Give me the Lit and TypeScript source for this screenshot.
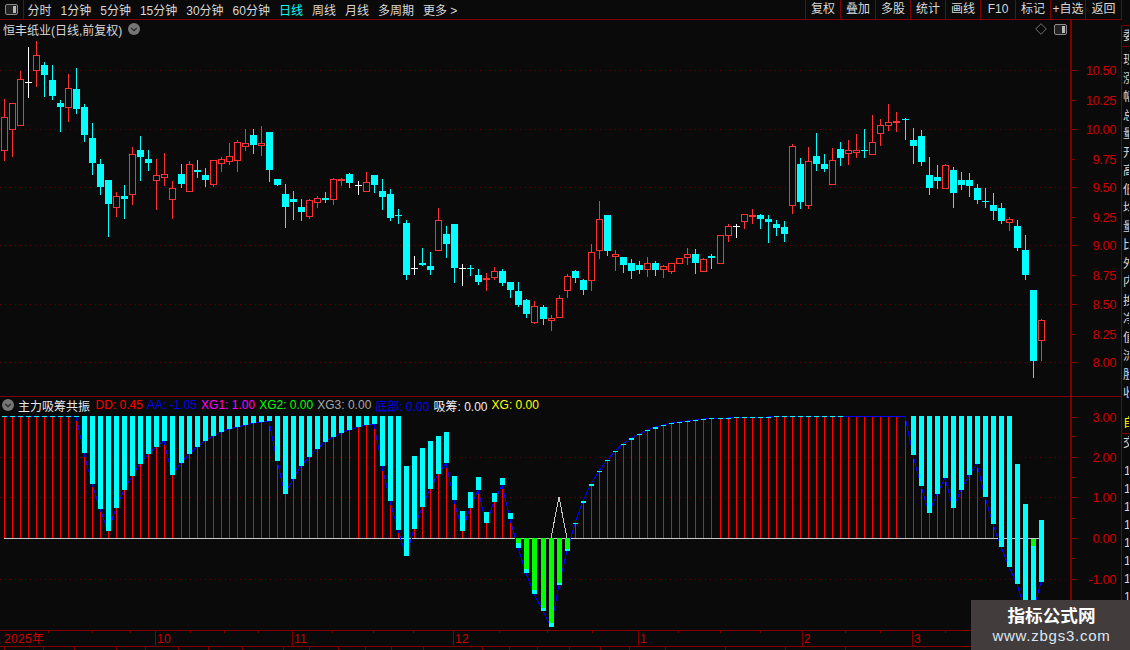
import { LitElement, css, html, svg } from "lit";
import { customElement } from "lit/decorators.js";

type Candle = { kind: string; high: number; top: number; bottom: number; low: number };
type Row = [string, number, number, number, number];

const RED = "#ff3232";
const CYAN = "#00ffff";

// rows read at 3x: kind, high, body top, body bottom, low, relative to a base y
const toCandles = (base: number, rows: Row[]): Candle[] =>
  rows.map(([kind, high, top, bottom, low]) => ({
    kind,
    high: Math.floor(base + high / 3),
    top: Math.floor(base + top / 3),
    bottom: Math.floor(base + bottom / 3),
    low: Math.floor(base + low / 3),
  }));

const candles: Candle[] = [
  ...toCandles(30, [
    ["r", 207, 262, 361, 392], ["r", 220, 220, 298, 380], ["r", 123, 148, 287, 287], ["w", 52, 157, 157, 203],
    ["r", 34, 76, 122, 170], ["c", 97, 106, 137, 200], ["c", 105, 151, 200, 209], ["c", 211, 220, 233, 305],
    ["r", 132, 175, 233, 275], ["c", 114, 178, 239, 251], ["c", 223, 232, 317, 335], ["c", 280, 325, 401, 434],
    ["c", 388, 403, 473, 494], ["c", 451, 451, 524, 620], ["r", 487, 499, 532, 560], ["c", 465, 499, 509, 566],
    ["r", 351, 373, 493, 524], ["c", 319, 361, 383, 452], ["c", 361, 388, 401, 422], ["r", 388, 436, 451, 539],
    ["r", 370, 433, 442, 467], ["r", 454, 475, 508, 566], ["c", 403, 433, 464, 472], ["r", 394, 403, 484, 485],
    ["c", 391, 421, 428, 443], ["c", 415, 436, 452, 470], ["r", 391, 391, 463, 470], ["r", 382, 388, 400, 424],
    ["r", 340, 379, 394, 403], ["r", 331, 337, 391, 425], ["r", 298, 340, 349, 361], ["c", 298, 316, 347, 371],
    ["r", 289, 340, 346, 377], ["c", 307, 307, 422, 455], ["c", 447, 448, 467, 467],
  ]),
  ...toCandles(150, [
    ["c", 102, 132, 173, 233], ["c", 123, 147, 158, 209], ["c", 148, 171, 186, 212], ["r", 148, 151, 200, 206],
    ["r", 139, 145, 158, 173], ["c", 126, 144, 150, 158], ["r", 85, 88, 149, 164], ["r", 85, 88, 92, 107],
    ["c", 70, 72, 101, 113], ["w", 94, 105, 105, 134], ["r", 67, 97, 125, 125], ["c", 76, 76, 107, 126],
    ["c", 88, 124, 143, 179], ["c", 118, 133, 206, 212], ["c", 178, 196, 200, 221], ["c", 211, 220, 377, 389],
    ["w", 319, 355, 355, 374], ["c", 295, 340, 347, 347], ["c", 307, 349, 362, 374], ["r", 175, 211, 302, 302],
    ["c", 229, 253, 284, 323], ["c", 223, 223, 356, 398], ["w", 343, 355, 355, 407], ["c", 346, 355, 359, 377],
    ["c", 358, 376, 398, 404], ["r", 370, 385, 388, 422], ["r", 352, 364, 383, 387], ["c", 358, 364, 401, 407],
    ["c", 397, 397, 422, 443], ["c", 397, 424, 467, 470], ["c", 448, 451, 494, 503], ["r", 454, 469, 518, 521],
    ["c", 466, 472, 509, 524], ["r", 496, 505, 512, 542], ["r", 436, 445, 502, 503], ["r", 373, 379, 421, 443],
    ["c", 361, 364, 386, 398],
  ]),
  ...toCandles(190, [
    ["c", 267, 270, 300, 312], ["r", 163, 187, 272, 300], ["r", 34, 88, 182, 204], ["c", 75, 75, 183, 195],
    ["r", 181, 193, 200, 240], ["c", 201, 201, 225, 246], ["c", 207, 219, 243, 264], ["c", 213, 225, 240, 249],
    ["r", 202, 220, 239, 258], ["c", 213, 219, 240, 255], ["r", 226, 229, 239, 261], ["r", 220, 220, 243, 249],
    ["r", 205, 205, 220, 221], ["r", 175, 193, 203, 222], ["c", 178, 192, 219, 249], ["r", 205, 208, 243, 243],
    ["c", 193, 198, 204, 234], ["r", 135, 136, 221, 221], ["r", 102, 109, 137, 153], ["w", 103, 108, 108, 141],
    ["r", 72, 73, 95, 114], ["r", 58, 75, 80, 100], ["c", 72, 75, 87, 114], ["c", 76, 87, 96, 156],
    ["c", 91, 102, 114, 135], ["c", 94, 112, 132, 153],
  ]),
  ...toCandles(95, [
    ["r", 148, 154, 331, 354], ["c", 190, 208, 323, 339], ["r", 157, 199, 331, 339], ["c", 114, 184, 209, 225],
    ["c", 178, 208, 224, 228], ["r", 160, 196, 269, 269], ["c", 142, 163, 191, 210], ["r", 136, 166, 175, 207],
    ["r", 118, 166, 172, 186], ["c", 102, 165, 168, 186], ["r", 61, 142, 179, 179], ["r", 72, 91, 116, 150],
    ["r", 28, 82, 91, 105], ["r", 52, 79, 83, 108], ["c", 70, 72, 77, 132], ["c", 99, 136, 155, 204],
    ["c", 106, 124, 203, 210], ["c", 187, 241, 281, 297], ["c", 211, 247, 260, 279], ["r", 208, 211, 281, 281],
    ["c", 217, 226, 296, 336], ["c", 232, 256, 270, 282], ["c", 235, 256, 273, 303], ["c", 268, 280, 315, 324],
    ["c", 280, 319, 320, 336], ["c", 295, 331, 350, 372], ["c", 325, 340, 380, 384], ["r", 367, 373, 383, 405],
    ["c", 376, 394, 461, 465], ["c", 421, 466, 542, 552], ["c", 586, 586, 800, 846], ["r", 673, 676, 737, 795],
  ]),
];

// x pixel of a bar's centre column, shared by both panes
const barX = (i: number) => Math.floor(4.05 + 8.0445 * i);

const ZERO = 538;

// cyan bars hanging from the 3.00 line: [index, bottom y]
const hanging: [number, number][] = [
  [10, 453], [11, 484], [12, 509], [13, 531], [14, 508], [15, 490], [16, 476], [17, 464], [18, 454], [19, 447],
  [20, 441], [21, 475], [22, 463], [23, 454], [24, 447], [25, 441], [26, 436], [27, 432], [28, 429], [29, 427],
  [30, 425], [31, 423], [32, 422], [33, 421], [34, 461], [35, 494], [36, 479], [37, 466], [38, 457], [39, 449],
  [40, 442], [41, 437], [42, 433], [43, 430], [44, 427], [45, 425], [46, 424], [47, 466], [48, 501], [49, 530],
  [113, 455], [114, 486], [115, 513], [116, 494], [117, 478], [118, 508], [119, 490], [120, 475], [121, 464],
  [122, 497], [123, 524], [124, 547], [125, 567],
];

// floating cyan bars: [index, top y, bottom y]
const floating: [number, number, number][] = [
  [50, 466, 556], [51, 456, 529], [52, 448, 507], [53, 441, 489], [54, 436, 474], [55, 432, 463], [56, 476, 500],
  [57, 511, 531], [58, 492, 508], [59, 477, 490], [60, 512, 523], [61, 493, 502], [62, 478, 485], [63, 513, 519],
  [126, 464, 584], [127, 504, 610], [129, 520, 582],
];

// green bars with a cyan foot: [index, green end, cyan end]
const falling: [number, number, number][] = [
  [64, 543, 548], [65, 569, 573], [66, 590, 594], [67, 608, 611], [68, 623, 627], [69, 583, 585], [70, 549, 551],
];

// rising stretch, only a dash sits on the stem: [index, y, dash height]
const dashes: [number, number, number][] = [
  [71, 523, 1], [72, 501, 2], [73, 484, 2], [74, 471, 1], [75, 460, 1], [76, 451, 1], [77, 444, 1], [78, 438, 2],
  [79, 434, 1], [80, 430, 1], [81, 427, 2], [82, 425, 1], [83, 423, 1], [84, 422, 1], [85, 421, 1], [86, 420, 1],
  [87, 419, 1], [88, 418, 1], [89, 418, 1], [90, 418, 1], [91, 417, 1], [92, 417, 1], [93, 417, 1], [94, 417, 1],
  [95, 417, 1], [96, 416, 1], [97, 416, 1], [98, 416, 1], [99, 416, 1], [100, 416, 1], [101, 416, 1], [102, 416, 1],
  [103, 416, 1], [104, 416, 1],
];

const values: number[] = [];
for (let i = 0; i < 130; i++) values[i] = 416;
hanging.forEach(([i, y]) => (values[i] = y));
floating.forEach(([i, , y]) => (values[i] = y));
falling.forEach(([i, , y]) => (values[i] = y));
dashes.forEach(([i, y]) => (values[i] = y));
values[128] = 612;

// label, y, tick length
const priceTicks: [string, number, number][] = [
  ["10.50", 70, 5], ["10.25", 100, 3], ["10.00", 129, 5], ["9.75", 159, 3], ["9.50", 187, 5], ["9.25", 217, 3],
  ["9.00", 245, 5], ["8.75", 275, 3], ["8.50", 304, 5], ["8.25", 334, 3], ["8.00", 362, 5],
];

const lowerLabels: [string, number][] = [["3.00", 417], ["2.00", 457], ["1.00", 497], ["0.00", 538], ["-1.00", 579]];
const lowerMinor = [436, 477, 518, 558, 600];

const months: [string, number][] = [["2025年", 0], ["10", 155], ["11", 292], ["12", 453], ["1", 638], ["2", 802], ["3", 912]];
const timeTicks = [48, 92, 130, 190, 224, 258, 332, 373, 413, 499, 547, 592, 678, 720, 760, 845, 880, 945, 985, 1030];

const legend = [
  ["DD: 0.45", "#ff0000"], ["AA: -1.05", "#0000ff"], ["XG1: 1.00", "#ff00ff"], ["XG2: 0.00", "#00ff00"],
  ["XG3: 0.00", "#a8a8a8"], ["底部: 0.00", "#0000ff"], ["吸筹: 0.00", "#f0f0f0"], ["XG: 0.00", "#ffff00"],
];

const periods = ["分时", "1分钟", "5分钟", "15分钟", "30分钟", "60分钟", "日线", "周线", "月线", "多周期"];
const tools = ["复权", "叠加", "多股", "统计", "画线", "F10", "标记", "+自选", "返回"];
const sideUpper = ["现", "涨", "幅", "总", "量", "开", "高", "低", "均", "量", "比", "外", "内", "换", "净", "值", "流", "股", "收"];
const tabs = [3, 39, 31, 42, 29, 33, 30, 34, 41, 26, 29, 27, 26, 32, 59, 27, 28, 32, 31, 29, 36, 60, 60, 60];

const panelIcon = () => svg`
  <svg width="13" height="11" viewBox="0 0 13 11">
    <rect x="0.5" y="0.5" width="12" height="10" rx="1.5" fill="#222" stroke="#8a8a8a"/>
    <rect x="8" y="2" width="3" height="7" fill="#b8b8b8"/>
  </svg>`;

const roundChevron = svg`
  <svg class="chevron" width="12" height="12" viewBox="0 0 12 12">
    <circle cx="6" cy="6" r="6" fill="#767676"/>
    <path d="M3.2 4.8 6 7.6 8.8 4.8" fill="none" stroke="#222" stroke-width="1.2"/>
  </svg>`;

@customElement("app-root")
export class AppRoot extends LitElement {
  static styles = css`
    :host {
      display: block;
      position: relative;
      width: 1130px;
      height: 650px;
      overflow: hidden;
      background: #0a0a0a;
      color: #d8d8d8;
      font: 12px "Liberation Sans", "Noto Sans CJK SC", sans-serif;
    }
    svg { display: block; }
    .toolbar {
      display: flex;
      align-items: center;
      width: 1122px;
      height: 19px;
      border-bottom: 1px solid #800000;
    }
    .toggle {
      display: flex;
      align-items: center;
      justify-content: center;
      width: 23px;
      height: 19px;
      border-right: 1px solid #800000;
      margin-right: 3.5px;
    }
    .periods { display: flex; gap: 9px; }
    .periods .on { color: #00ffff; }
    .tools { display: flex; margin-left: auto; }
    .tools span {
      box-sizing: border-box;
      width: 35px;
      height: 19px;
      line-height: 18px;
      text-align: center;
      border-left: 1px solid #800000;
    }
    .tools span:last-child { width: 37px; border-right: 1px solid #800000; }
    .main { display: flex; }
    .left { width: 1121px; flex: none; }
    .pane { display: flex; position: relative; }
    .pane.top { height: 376px; border-bottom: 1px solid #800000; }
    .pane.lower { height: 233px; }
    .chart { width: 1070px; height: 100%; flex: none; }
    .axis { width: 49px; height: 100%; flex: none; border-left: 2px solid #800000; }
    .axis text { fill: #cc0000; font-size: 13px; letter-spacing: -0.45px; text-anchor: end; }
    .title {
      position: absolute;
      top: 1px;
      left: 3px;
      display: flex;
      align-items: center;
      gap: 6px;
      height: 16px;
    }
    .corner {
      position: absolute;
      top: 3px;
      right: 54px;
      display: flex;
      align-items: center;
      gap: 7px;
    }
    .legend {
      position: absolute;
      top: 0;
      left: 2px;
      display: flex;
      align-items: center;
      gap: 4.07px;
      height: 16px;
      white-space: nowrap;
    }
    .legend .name { color: #e8e8e8; margin-right: 1.4px; }
    .time { height: 15px; border-top: 1px solid #800000; border-bottom: 1px solid #800000; }
    .time svg { width: 1121px; height: 15px; }
    .time text { fill: #cc0000; font-size: 12px; letter-spacing: 0.3px; }
    .tabs { display: flex; height: 4px; }
    .tabs span {
      box-sizing: border-box;
      flex: none;
      height: 24px;
      border-right: 1px solid #800000;
      padding: 2px 0 0 4px;
      color: #e8e8e8;
      white-space: nowrap;
    }
    .strip {
      width: 8px;
      box-sizing: border-box;
      border-left: 1px solid #800000;
      overflow: hidden;
      margin-top: 5px;
      white-space: nowrap;
    }
    .strip .cell { height: 18.5px; line-height: 18.5px; padding-left: 1px; color: #d8d8d8; }
    .strip .cell.head { height: 20px; line-height: 20px; border-top: 1px solid #800000; border-bottom: 1px solid #800000; margin-bottom: 4px; }
    .strip .gap { height: 10px; }
    .strip .self { height: 20px; line-height: 20px; padding-left: 1px; color: #ffff00; border-bottom: 1px solid #800000; }
    .strip .num { height: 18px; line-height: 18px; padding-left: 2px; }
    .mark {
      position: absolute;
      right: 0;
      bottom: 0;
      width: 159px;
      height: 50px;
      display: flex;
      flex-direction: column;
      align-items: center;
      background: #433c3c;
      padding-left: 2px;
      box-sizing: border-box;
    }
    .mark b { margin-top: 4px; font: bold 17.6px/22px "Noto Sans CJK SC", sans-serif; color: #fff; }
    .mark span { font: 15px/20px "Liberation Sans", sans-serif; letter-spacing: 0.75px; color: #dbe6f2; }
  `;

  private candleMarks() {
    return candles.map((c, i) => {
      const x = barX(i);
      const color = c.kind === "r" ? RED : c.kind === "c" ? CYAN : "#ffffff";
      const wick = svg`<rect x=${x} y=${c.high} width="1" height=${c.low - c.high + 1} fill=${color}/>`;
      if (c.kind === "w") {
        return svg`${wick}<rect x=${x - 3} y=${c.top} width="7" height="1" fill=${color}/>`;
      }
      if (c.kind === "c") {
        return svg`${wick}<rect x=${x - 3} y=${c.top} width="7" height=${Math.max(c.bottom - c.top, 1)} fill=${color}/>`;
      }
      return svg`${wick}<rect x=${x - 2.5} y=${c.top + 0.5} width="6" height=${Math.max(c.bottom - c.top, 1)}
        fill="#0a0a0a" stroke=${color}/>`;
    });
  }

  private dotted(y: number) {
    return svg`<line x1="0" x2="1070" y1=${y + 0.5} y2=${y + 0.5} stroke="#6a0000" stroke-dasharray="1 4"/>`;
  }

  private lowerMarks() {
    const stems = values.map((v, i) => {
      if (v >= ZERO || (i >= 64 && i <= 70)) return null;
      return svg`<rect x=${barX(i)} y=${v} width="1" height=${ZERO - v} fill="#ff0000"/>`;
    });
    const bar = (i: number, top: number, bottom: number, fill: string) =>
      svg`<rect x=${barX(i) - 2} y=${top} width="5" height=${bottom - top} fill=${fill}/>`;
    const line = values.map((v, i) => `${barX(i)},${v}`).join(" ");
    const peak = [68, 69, 70].map((i) => `${barX(i)},${i === 69 ? 497 : ZERO}`).join(" ");
    return svg`
      ${[457, 497, 579].map((y) => this.dotted(y))}
      ${stems}
      <polyline points=${peak} fill="none" stroke="#c8c8c8" shape-rendering="crispEdges"/>
      <rect x="4" y=${ZERO} width="1037" height="1" fill="#c8c8c8"/>
      <polyline points=${line} fill="none" stroke="#0000ff" shape-rendering="crispEdges"/>
      ${Array.from({ length: 10 }, (_, i) => bar(i, 416, 417, CYAN))}
      ${dashes.map(([i, y, h]) => bar(i, y, y + h, CYAN))}
      ${hanging.map(([i, y]) => bar(i, 416, y, CYAN))}
      ${floating.map(([i, top, y]) => bar(i, top, y, CYAN))}
      ${falling.map(([i, green, y]) => svg`${bar(i, ZERO, green, "#00ff00")}${bar(i, green, y, CYAN)}`)}
      ${bar(128, 539, 546, "#00ff00")}${bar(128, 546, 612, CYAN)}
    `;
  }

  render() {
    return html`
      <div class="toolbar">
        <div class="toggle">${panelIcon()}</div>
        <div class="periods">
          ${periods.map((p) => html`<span class=${p === "日线" ? "on" : ""}>${p}</span>`)}
          <span>更多 &gt;</span>
        </div>
        <div class="tools">${tools.map((t) => html`<span>${t}</span>`)}</div>
      </div>
      <div class="main">
        <div class="left">
          <div class="pane top">
            <svg class="chart" viewBox="0 20 1070 376" shape-rendering="crispEdges">
              ${[70, 129, 187, 245, 304, 362].map((y) => this.dotted(y))}
              ${this.candleMarks()}
            </svg>
            <svg class="axis" viewBox="1072 20 49 376">
              ${priceTicks.map(
                ([label, y, len]) => svg`<rect x="1072" y=${y} width=${len} height="1" fill="#800000"/>
                  <text x="1116" y=${y + 5}>${label}</text>`
              )}
            </svg>
            <div class="title">恒丰纸业(日线,前复权)${roundChevron}</div>
            <div class="corner">
              <svg width="12" height="12" viewBox="0 0 12 12">
                <path d="M6 .7 11.3 6 6 11.3 .7 6Z" fill="none" stroke="#707070"/>
              </svg>
              ${panelIcon()}
            </div>
          </div>
          <div class="pane lower">
            <svg class="chart" viewBox="0 397 1070 233">${this.lowerMarks()}</svg>
            <svg class="axis" viewBox="1072 397 49 233">
              ${lowerLabels.map(
                ([label, y]) => svg`<rect x="1072" y=${y} width="5" height="1" fill="#800000"/>
                  <text x="1116" y=${y + 5}>${label}</text>`
              )}
              ${lowerMinor.map((y) => svg`<rect x="1072" y=${y} width="3" height="1" fill="#800000"/>`)}
            </svg>
            <div class="legend">
              ${roundChevron}
              <span class="name">主力吸筹共振</span>
              ${legend.map(([t, c]) => html`<span style="color:${c}">${t}</span>`)}
            </div>
          </div>
          <div class="time">
            <svg viewBox="0 631 1121 15" shape-rendering="crispEdges">
              ${months.map(
                ([m, x]) => svg`${x ? svg`<rect x=${x} y="631" width="1" height="15" fill="#800000"/>` : null}
                  <text x=${x + (x ? 2 : 4)} y="643" shape-rendering="auto">${m}</text>`
              )}
              ${timeTicks.map((x) => svg`<rect x=${x} y="631" width="1" height="2" fill="#800000"/>`)}
            </svg>
          </div>
          <div class="tabs">
            ${tabs.map(
              (w, i) => html`<span style="width:${w}px">${i === 1 ? "指标" : i === 2 ? "设" : ""}</span>`
            )}
          </div>
        </div>
        <div class="strip">
          <div class="cell head">委</div>
          ${sideUpper.map((c) => html`<div class="cell">${c}</div>`)}
          <div class="gap"></div>
          <div class="self">自</div>
          <div class="cell">交</div>
          <div class="gap"></div>
          ${[0, 1, 2, 3, 4, 5, 6, 7, 8].map(() => html`<div class="num">1</div>`)}
        </div>
      </div>
      <div class="mark">
        <b>指标公式网</b>
        <span>www.zbgs3.com</span>
      </div>
    `;
  }
}
